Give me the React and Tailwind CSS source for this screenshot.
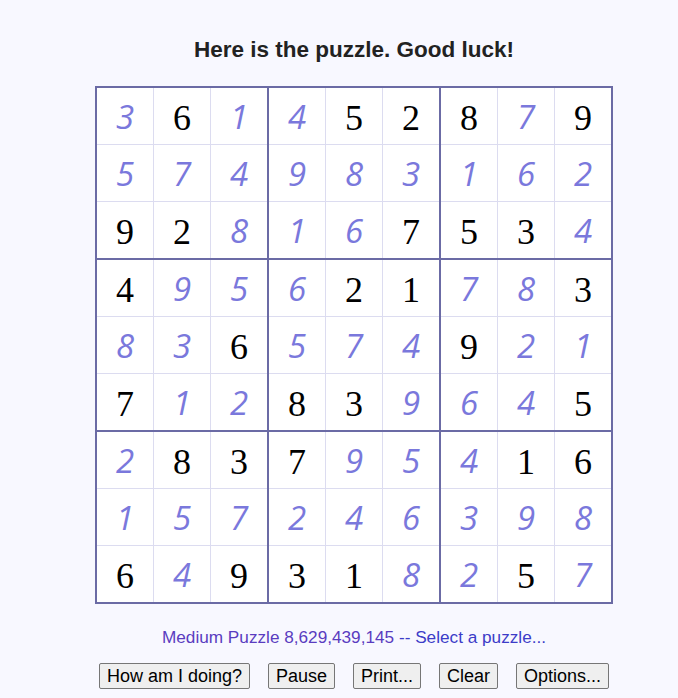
const values = "361452879574983162928167534495621783836574921712839645283795416157246398649318257";

// 1 = printed clue, 0 = typed in by the player
const rowsGiven = [
    "010011101",
    "000000000",
    "110001110",
    "100011001",
    "001000100",
    "100110001",
    "011100011",
    "000000000",
    "101110010",
]
const fixedMask = rowsGiven.join('')

function Cell({ value, isGiven }) {
    return (
        <div className="bg-white h-[56px] w-[56px] flex items-center justify-center select-none">
            {isGiven
                ? <span className="text-black text-[36px] leading-none pt-[3px]" style={{ fontFamily: '"Liberation Serif", "DejaVu Serif", serif' }}>{value}</span>
                : <span className="text-[#7a78dc] text-[33px] italic font-medium leading-none" style={{ fontFamily: '"Open Sans", "DejaVu Sans", sans-serif' }}>{value}</span>}
        </div>
    )
}

function Box({ br, bc }) {
    const cells = []
    for (let r = 0; r < 3; r++) {
        for (let c = 0; c < 3; c++) {
            const i = (br * 3 + r) * 9 + bc * 3 + c
            cells.push(<Cell key={i} value={values[i]} isGiven={fixedMask[i] === '1'} />)
        }
    }
    return <div className="grid grid-cols-3 gap-px bg-[#dcdcf0]">{cells}</div>
}

export default function App() {
    const boxes = []
    for (let br = 0; br < 3; br++) {
        for (let bc = 0; bc < 3; bc++) {
            boxes.push(<Box key={br + '-' + bc} br={br} bc={bc} />)
        }
    }

    const btn = "h-[26px] px-[7px] bg-[#efefef] border border-[#767676] rounded-[2px] text-[18px] leading-none text-black"

    return (
        <div className="min-h-screen bg-[#f8f8ff] flex flex-col items-center pl-[30px] pt-[37px]" style={{ fontFamily: '"Liberation Sans", Arial, sans-serif' }}>
            <h1 className="text-[22.5px] leading-[26px] font-bold text-[#222]">Here is the puzzle. Good luck!</h1>

            <div className="mt-[23px] border-2 border-[#6b6ba5] bg-[#6b6ba5] grid grid-cols-3 gap-[2px]">
                {boxes}
            </div>

            <p className="mt-[24px] text-[17.2px] leading-[18px]">
                <span className="text-[#5a3cc0]">Medium Puzzle 8,629,439,145</span>
                <span className="text-[#3c3cc8]"> -- Select a puzzle...</span>
            </p>

            <div className="mt-[17px] flex gap-[18px]">
                <button className={btn}>How am I doing?</button>
                <button className={btn}>Pause</button>
                <button className={btn}>Print...</button>
                <button className={btn}>Clear</button>
                <button className={btn}>Options...</button>
            </div>
        </div>
    )
}
